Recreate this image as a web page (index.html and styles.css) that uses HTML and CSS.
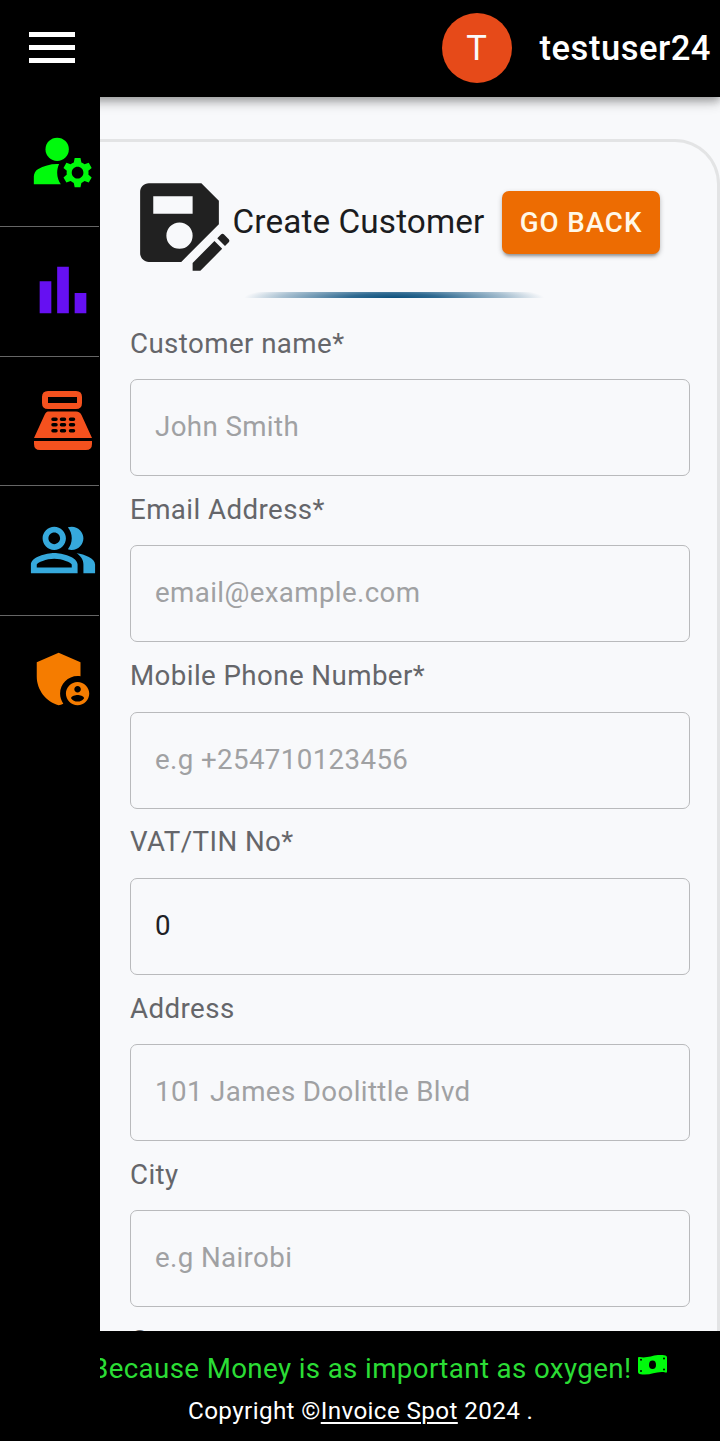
FILE: index.html
```
<!DOCTYPE html>
<html lang="en">
<head>
<meta charset="utf-8">
<title>Create Customer</title>
<link rel="stylesheet" href="styles.css">
</head>
<body>
<div class="app">
  <header class="topbar">
    <button class="menu" aria-label="Menu"><span></span><span></span><span></span></button>
    <div class="user"><span class="avatar">T</span><span class="username">testuser24</span></div>
  </header>
  <div class="body">
    <nav class="sidebar">
      <a class="nav-item green"><svg viewBox="0 0 24 24"><circle cx="10" cy="8" r="4"/><path d="M10.67 13.02C10.45 13.01 10.23 13 10 13c-2.42 0-4.68.67-6.61 1.82-.88.52-1.39 1.5-1.39 2.53V20h9.26c-.79-1.13-1.26-2.51-1.26-4 0-1.07.25-2.07.67-2.98zM20.75 16c0-.22-.03-.42-.06-.63l1.14-1.01-1-1.73-1.45.49c-.32-.27-.68-.48-1.08-.63L18 11h-2l-.3 1.49c-.4.15-.76.36-1.08.63l-1.45-.49-1 1.73 1.14 1.01c-.03.21-.06.41-.06.63s.03.42.06.63l-1.14 1.01 1 1.73 1.45-.49c.32.27.68.48 1.08.63L16 21h2l.3-1.49c.4-.15.76-.36 1.08-.63l1.45.49 1-1.73-1.14-1.01c.03-.21.06-.41.06-.63zM17 18c-1.1 0-2-.9-2-2s.9-2 2-2 2 .9 2 2-.9 2-2 2z"/></svg></a>
      <a class="nav-item purple"><svg viewBox="0 0 24 24"><path d="M4 9h4v11H4zm12 4h4v7h-4zm-6-9h4v16h-4z"/></svg></a>
      <a class="nav-item red"><svg viewBox="0 0 70 70"><path fill-rule="evenodd" d="M20 6h28q6 0 6 6v6q0 6-6 6H20q-6 0-6-6v-6q0-6 6-6zm0 6v6h29v-6z"/><path d="M20 26.500h28q4 0 5.500 3.500L64 53H6l10.500-23q1.500-3.500 3.500-3.500zM6 56h58v3q0 6-6 6H12q-6 0-6-6z"/><path class="keys" d="M25 34.200h3M33.500 34.200h3M42.500 34.200h3M25 39.800h3M33.500 39.800h3M42.500 39.800h3M25 45.700h3M33.500 45.700h3M42.500 45.700h3"/></svg></a>
      <a class="nav-item blue"><svg viewBox="0 0 24 24"><path d="M16.670 13.130C18.040 14.060 19 15.320 19 17v3h4v-3c0-2.180-3.570-3.470-6.330-3.870zM15 12c2.210 0 4-1.790 4-4s-1.790-4-4-4c-.47 0-.91.1-1.330.24C14.500 5.270 15 6.580 15 8s-.5 2.730-1.330 3.760c.42.14.86.24 1.330.24zM9 12c2.210 0 4-1.790 4-4s-1.790-4-4-4-4 1.790-4 4 1.790 4 4 4zm0-6c1.100 0 2 .9 2 2s-.9 2-2 2-2-.9-2-2 .9-2 2-2zM9 13c-2.670 0-8 1.340-8 4v3h16v-3c0-2.660-5.330-4-8-4zm6 5H3v-.99C3.200 16.290 6.300 15 9 15s5.800 1.290 6 2v1z"/></svg></a>
      <a class="nav-item orange"><svg viewBox="0 0 24 24"><path d="M17 11c.34 0 .67.04 1 .09V6.270L10.500 3 3 6.270v4.910c0 4.540 3.200 8.790 7.500 9.820.55-.13 1.080-.32 1.600-.55-.69-.98-1.100-2.170-1.100-3.450 0-3.310 2.690-6 6-6z"/><path d="M17 13c-2.210 0-4 1.790-4 4s1.790 4 4 4 4-1.790 4-4-1.790-4-4-4zm0 1.380c.62 0 1.120.51 1.120 1.120s-.51 1.120-1.120 1.120-1.120-.51-1.120-1.120.5-1.120 1.120-1.120zm0 5.370c-.93 0-1.740-.46-2.240-1.170.05-.72 1.510-1.080 2.240-1.080s2.190.36 2.240 1.080c-.5.71-1.310 1.170-2.240 1.170z"/></svg></a>
    </nav>
    <main class="content">
      <form class="card">
        <div class="heading">
          <svg class="save" viewBox="0 0 24 24"><path fill-rule="evenodd" d="M21 12.400V7l-4-4H5c-1.110 0-2 .9-2 2v14c0 1.100.89 2 2 2h7.400zM15 15a3 3 0 1 1-6 0 3 3 0 0 1 6 0zM6 6h9v4H6zM19.990 16.250l1.770 1.770L16.770 23H15v-1.770zM23.250 16.510l-.85.85-1.770-1.770.85-.85c.2-.2.51-.2.71 0l1.060 1.060c.2.2.2.52 0 .71z"/></svg>
          <h1>Create Customer</h1>
          <button class="back" type="button">GO BACK</button>
        </div>
        <div class="rule"></div>
        <label class="field"><span>Customer name*</span><input placeholder="John Smith"></label>
        <label class="field"><span>Email Address*</span><input placeholder="email@example.com"></label>
        <label class="field"><span>Mobile Phone Number*</span><input placeholder="e.g +254710123456"></label>
        <label class="field"><span>VAT/TIN No*</span><input value="0"></label>
        <label class="field"><span>Address</span><input placeholder="101 James Doolittle Blvd"></label>
        <label class="field"><span>City</span><input placeholder="e.g Nairobi"></label>
        <label class="field"><span>Country</span></label>
      </form>
    </main>
  </div>
  <footer class="footer">
    <div class="ticker"><span>Because Money is as important as oxygen!</span><svg viewBox="0 0 29 20"><path d="M0 3Q0 1.500 1.500 2C11 4 17-2 27.500.5Q29 1 29 2.500V16.500Q29 18 27.500 17.500C18 15.500 12 21.500 1.500 19Q0 18.500 0 17z"/><ellipse class="hole" cx="14.500" cy="9.800" rx="3.500" ry="4.300"/><circle class="hole" cx="3" cy="4.800" r="1"/><circle class="hole" cx="3" cy="16" r="1"/><circle class="hole" cx="26" cy="3.500" r="1"/><circle class="hole" cx="26" cy="14.500" r="1"/></svg></div>
    <p class="copyright">Copyright ©<a>Invoice Spot</a> 2024 .</p>
  </footer>
</div>
</body>
</html>
```
FILE: styles.css
```
* { box-sizing: border-box; }
body { margin: 0; background: #000; font-family: Roboto, sans-serif; }
.app { height: 1441px; display: flex; flex-direction: column; overflow: hidden; }
.topbar { flex: none; height: 97px; background: #000; display: flex; justify-content: space-between; padding: 0 9px 0 29px; position: relative; z-index: 1; box-shadow: 0 3px 7px rgba(0,0,0,.2), 0 7px 9px rgba(0,0,0,.14), 0 2px 17px rgba(0,0,0,.12); }
.menu { width: 46px; height: 31px; margin-top: 32px; padding: 0; border: 0; background: none; display: flex; flex-direction: column; justify-content: space-between; }
.menu span { display: block; height: 5.3px; width: 100%; background: #fff; }
.user { display: flex; align-items: center; height: 95px; gap: 28px; color: #fff; }
.avatar { width: 70px; height: 70px; border-radius: 50%; background: #e64a19; font-size: 34.6px; display: flex; align-items: center; justify-content: center; color: #fafafa; }
.username { font-size: 34.600px; font-weight: 500; letter-spacing: .5px; }
.body { flex: none; height: 1234px; display: flex; overflow: hidden; }
.sidebar { width: 100px; flex: none; background: #000; position: relative; z-index: 2; }
.nav-item { display: flex; width: 99px; height: 129.750px; padding: 29px 0 0 28px; border-bottom: 1px solid #666; }
.nav-item:last-child { border-bottom: 0; }
.nav-item svg { width: 70px; height: 70px; fill: currentColor; }
.green { color: #00fa0c; }
.purple { color: #6610f2; padding-top: 28.500px; }
.red { color: #f4511e; padding-top: 28px; }
.blue { color: #36a9dc; }
.orange { color: #f57c00; padding-top: 28px; }
.keys { fill: none; stroke: #000; stroke-width: 3.500; stroke-linecap: round; }
.content { flex: 1; background: #f8f9fb; padding-top: 42px; overflow: hidden; }
.card { height: 1300px; padding: 28px 28px 0 30px; border-top: 3px solid #e3e4e5; border-right: 3px solid #e3e4e5; border-radius: 0 45px 0 0; }
.heading { height: 105px; display: flex; align-items: flex-start; margin-left: -3px; }
.save { width: 105px; height: 105px; flex: none; fill: #212121; }
h1 { flex: none; width: 270px; margin: 32px 0 0 .500px; font-size: 33.300px; line-height: 40px; font-weight: 400; letter-spacing: .12px; color: #1b1c20; white-space: nowrap; }
.back { flex: none; width: 158px; height: 63px; margin: 21px 0 0 -.500px; padding: 0; border: 0; border-radius: 7px; background: #ed6c02; color: #fff8e8; font: 500 27.700px/62px Roboto, sans-serif; letter-spacing: .95px; box-shadow: 0 4px 3px -2px rgba(0,0,0,.25), 0 2px 5px rgba(0,0,0,.25); }
.rule { width: 300px; height: 6px; margin: 17px 0 0 114px; background: radial-gradient(ellipse 50% 250% at 50% 100%, #0b507c 0%, #2f6a91 30%, rgba(47,106,145,.4) 75%, transparent 100%); }
.field { display: flex; flex-direction: column; height: 166.300px; }
.field span { flex: none; padding-top: 29.500px; height: 81px; font-size: 27.700px; line-height: 32px; letter-spacing: .42px; color: #65666a; }
.field input { width: 560px; height: 97px; flex: none; padding: 0 24px 2px; border: 1px solid #b9babc; border-radius: 7px; background: transparent; font: 400 27.700px Roboto, sans-serif; letter-spacing: .38px; color: #202124; outline: none; }
.field input::placeholder { color: #a0a1a3; opacity: 1; }
.footer { flex: 1; background: #000; color: #fff; }
.ticker { margin-left: 100px; height: 59px; padding-top: 21px; overflow: hidden; display: flex; align-items: flex-start; color: #2bdd35; font-size: 27.700px; line-height: 34px; letter-spacing: .38px; white-space: nowrap; }
.ticker span { flex: none; margin-left: -9px; }
.ticker svg { width: 29px; height: 20px; margin: 2.500px 0 0 7px; fill: #00fa0c; }
.ticker .hole { fill: #000; }
.copyright { margin: 5.500px 0 0 188px; font-size: 24.250px; line-height: 30px; letter-spacing: .37px; }
.copyright a { text-decoration: underline; text-underline-offset: 3px; text-decoration-thickness: 2px; }
```
